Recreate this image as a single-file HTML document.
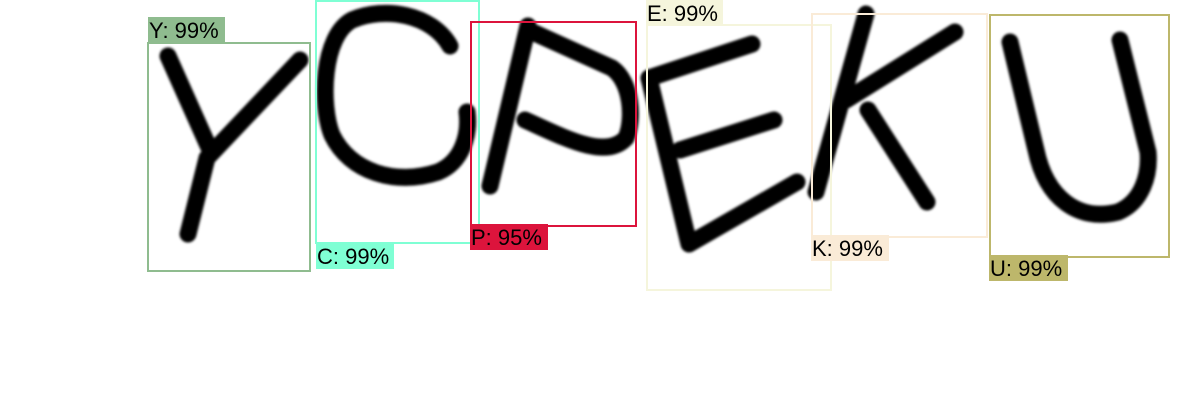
<!DOCTYPE html>
<html><head><meta charset="utf-8"><style>
html,body{margin:0;padding:0;background:#fff;width:1200px;height:420px;overflow:hidden}
.l{position:absolute;font:22px "Liberation Sans",Arial,sans-serif;color:#000;line-height:28px;height:26px;padding:0 0 0 1px;box-sizing:border-box;overflow:visible;white-space:nowrap}
.b{position:absolute;box-sizing:border-box;border:2px solid}
</style></head><body>
<svg width="1200" height="420" style="position:absolute;left:0;top:0" fill="none" stroke="#000" stroke-width="17" stroke-linecap="round" stroke-linejoin="round">
<g filter="url(#bl)">
<path d="M168,56 L210,150 M300,60 L207,158 L188,234"/>
<path d="M450,46 C432,14 385,6 352,20 C322,36 320,105 332,135 C350,172 395,186 438,172 C462,162 470,135 467,112"/>
<path d="M528,26 L490,186 M528,30 L612,68 C632,82 634,120 626,138 C606,160 565,138 525,120"/>
<path d="M649,78 L689,244 M649,78 L752,44 M680,150 L774,120 M689,244 L797,182"/>
<path d="M866,14 L816,192 M955,32 L846,100 M868,110 L927,202"/>
<path d="M1010,42 L1036,150 C1046,198 1078,222 1118,212 C1142,202 1150,175 1148,152 L1120,40"/>
</g>
<defs><filter id="bl"><feGaussianBlur stdDeviation="1.2"/></filter></defs>
</svg>
<div class="b" style="left:147px;top:42px;width:164px;height:230px;border-color:#8fbc8f"></div>
<div class="l" style="left:148px;top:17px;width:77px;background:#8fbc8f">Y: 99%</div>
<div class="b" style="left:315px;top:0;width:165px;height:244px;border-color:#7fffd4"></div>
<div class="l" style="left:316px;top:243px;width:78px;background:#7fffd4">C: 99%</div>
<div class="b" style="left:470px;top:21px;width:167px;height:206px;border-color:#dc143c"></div>
<div class="l" style="left:470px;top:224px;width:78px;background:#dc143c">P: 95%</div>
<div class="b" style="left:646px;top:24px;width:186px;height:267px;border-color:#f5f5dc"></div>
<div class="l" style="left:646px;top:0;width:77px;background:#f5f5dc">E: 99%</div>
<div class="b" style="left:811px;top:13px;width:177px;height:225px;border-color:#faebd7"></div>
<div class="l" style="left:811px;top:235px;width:78px;background:#faebd7">K: 99%</div>
<div class="b" style="left:989px;top:14px;width:181px;height:244px;border-color:#bdb76b"></div>
<div class="l" style="left:989px;top:255px;width:79px;background:#bdb76b">U: 99%</div>
</body></html>
